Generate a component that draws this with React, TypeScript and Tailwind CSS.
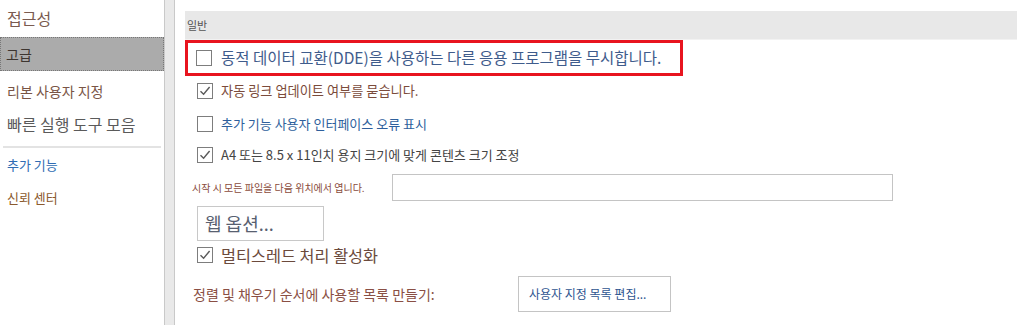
import React from "react";

const font = { fontFamily: '"Noto Sans CJK KR", "Noto Sans", sans-serif' };

const Box = ({ checked }: { checked?: boolean }) => (
  <span className="flex h-[16px] w-[16px] shrink-0 items-center justify-center border border-[#7d7d7d] bg-white">
    {checked && (
      <svg width="12" height="12" viewBox="0 0 12 12">
        <path d="M1.5 6.2 L4.6 9.3 L10.6 2" fill="none" stroke="#5a5a5a" strokeWidth="1.4" />
      </svg>
    )}
  </span>
);

const sideItems = [
  { text: "리본 사용자 지정", cls: "mt-[9px] h-[22px] text-[14px] text-[#7a5546]" },
  { text: "빠른 실행 도구 모음", cls: "mt-[11px] h-[24px] text-[16px] text-[#5a5a5a]" },
];

export default function App() {
  return (
    <div className="flex h-[325px] w-[1024px] overflow-hidden bg-white" style={font}>
      <div className="flex w-[164px] shrink-0 flex-col">
        <div className="mt-[6px] h-[24px] pl-[7px] text-[16px] leading-[24px] text-[#7a5b50]">접근성</div>
        <div className="mt-[7px] flex h-[34px] items-center border border-dotted border-[#777] bg-[#ababab] pl-[5px] text-[14px] text-[#3d3530]">
          고급
        </div>
        {sideItems.map((s) => (
          <div key={s.text} className={`pl-[7px] leading-[22px] ${s.cls}`}>
            {s.text}
          </div>
        ))}
        <div className="mx-[3px] mt-[9px] h-[2px] bg-[#e3e3e3]" />
        <div className="mt-[8px] pl-[7px] text-[13px] leading-[18px] text-[#2f6cb3]">추가 기능</div>
        <div className="mt-[15px] pl-[7px] text-[13px] leading-[18px] text-[#8b5a2e]">신뢰 센터</div>
      </div>
      <div className="w-[11px] shrink-0 border-x border-[#c9c9c9] bg-[#e9e9e9]" />
      <div className="flex flex-1 flex-col pl-[10px] pr-[7px]">
        <div className="mt-[11px] flex h-[29px] items-center border-b border-[#f2f2f2] bg-[#e8e8e8] pl-[2px] text-[11px] text-[#555]">
          일반
        </div>
        <div className="flex h-[36px] w-[498px] items-center gap-[9px] border-[3px] border-[#e8141f] pl-[8px] text-[15.5px] text-[#3f5c8c]">
          <Box />
          <span>동적 데이터 교환(DDE)을 사용하는 다른 응용 프로그램을 무시합니다.</span>
        </div>
        <div className="mt-[7px] flex h-[16px] items-center gap-[8px] pl-[12px] text-[13.2px] text-[#7b4b3b]">
          <Box checked />
          <span>자동 링크 업데이트 여부를 묻습니다.</span>
        </div>
        <div className="mt-[17px] flex h-[16px] items-center gap-[8px] pl-[12px] text-[13px] text-[#2e5f9c]">
          <Box />
          <span>추가 기능 사용자 인터페이스 오류 표시</span>
        </div>
        <div className="mt-[15px] flex h-[16px] items-center gap-[8px] pl-[12px] text-[13px] text-[#444]">
          <Box checked />
          <span>A4 또는 8.5 x 11인치 용지 크기에 맞게 콘텐츠 크기 조정</span>
        </div>
        <div className="mt-[11px] flex h-[27px] items-center">
          <span className="w-[207px] pl-[7px] text-[10px] text-[#8a4b3c]">시작 시 모든 파일을 다음 위치에서 엽니다.</span>
          <div className="h-[27px] w-[501px] border border-[#c4c4c4] bg-white" />
        </div>
        <div className="ml-[12px] mt-[5px] flex h-[35px] w-[127px] items-center border border-[#c8c8c8] pl-[7px] text-[18px] text-[#586070]">
          웹 옵션...
        </div>
        <div className="mt-[6px] flex h-[16px] items-center gap-[8px] pl-[12px] text-[16.3px] text-[#6b4a3c]">
          <Box checked />
          <span>멀티스레드 처리 활성화</span>
        </div>
        <div className="mt-[13px] flex h-[36px] items-center">
          <span className="w-[333px] pl-[8px] text-[14px] text-[#8a4f44]">정렬 및 채우기 순서에 사용할 목록 만들기:</span>
          <div className="flex h-[36px] w-[153px] items-center border border-[#c4c4c4] pl-[10px] text-[12px] text-[#2e5590]">
            사용자 지정 목록 편집...
          </div>
        </div>
      </div>
    </div>
  );
}
